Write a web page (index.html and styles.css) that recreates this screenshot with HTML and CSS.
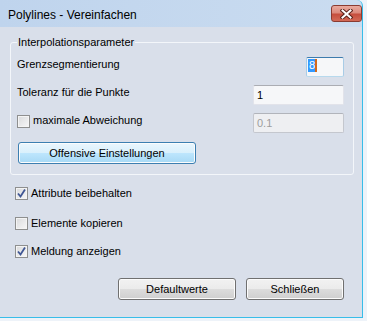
FILE: index.html
```html
<!DOCTYPE html>
<html lang="de">
<head>
<meta charset="utf-8">
<title>Polylines - Vereinfachen</title>
<link rel="stylesheet" href="styles.css">
</head>
<body>
<div class="window">
  <div class="titlebar">
    <span class="title">Polylines - Vereinfachen</span>
    <span class="close-x">
      <svg width="13" height="10" viewBox="0 0 13 10">
        <path d="M2.5 1.5 L10.5 8.5 M10.5 1.5 L2.5 8.5" stroke="#5a231b" stroke-width="4" stroke-linecap="square"/>
        <path d="M2.5 1.5 L10.5 8.5 M10.5 1.5 L2.5 8.5" stroke="#ffffff" stroke-width="2" stroke-linecap="square"/>
      </svg>
    </span>
  </div>
  <div class="client">
    <fieldset class="group">
      <legend>Interpolationsparameter</legend>
      <div class="row">
        <span class="label">Grenzsegmentierung</span>
        <span class="textbox focus narrow"><span class="sel">8</span><span class="caret"></span></span>
      </div>
      <div class="row">
        <span class="label">Toleranz für die Punkte</span>
        <span class="textbox wide">1</span>
      </div>
      <div class="row">
        <span class="check"></span>
        <span class="label">maximale Abweichung</span>
        <span class="textbox wide disabled">0.1</span>
      </div>
      <div class="btnrow">
        <span class="button hot offensive">Offensive Einstellungen</span>
      </div>
    </fieldset>
    <div class="checkrow r1">
      <span class="check checked"><svg width="11" height="11" viewBox="0 0 11 11"><path d="M2 5.5 L4.5 8.5 L9 1.5" fill="none" stroke="#3f5694" stroke-width="1.8"/></svg></span>
      <span class="label">Attribute beibehalten</span>
    </div>
    <div class="checkrow r2">
      <span class="check"></span>
      <span class="label">Elemente kopieren</span>
    </div>
    <div class="checkrow r3">
      <span class="check checked"><svg width="11" height="11" viewBox="0 0 11 11"><path d="M2 5.5 L4.5 8.5 L9 1.5" fill="none" stroke="#3f5694" stroke-width="1.8"/></svg></span>
      <span class="label">Meldung anzeigen</span>
    </div>
    <div class="actions">
      <span class="button defaults">Defaultwerte</span>
      <span class="button closebtn">Schließen</span>
    </div>
  </div>
</div>
</body>
</html>
```

FILE: styles.css
```css
html, body {
  margin: 0;
  padding: 0;
}
body {
  width: 367px;
  height: 321px;
  overflow: hidden;
  background: #eef3f9;
  font-family: "Liberation Sans", Arial, sans-serif;
  font-size: 11px;
  color: #000;
}
.window {
  box-sizing: border-box;
  width: 363px;
  height: 318px;
  display: flex;
  flex-direction: column;
  border-right: 1px solid #38bde9;
  border-bottom: 1px solid #38bde9;
  border-top-right-radius: 6px;
  background: linear-gradient(to right, #bfd4ed, #cadcf0);
}
.titlebar {
  height: 27px;
  flex: none;
  display: flex;
  align-items: flex-start;
  padding-left: 8px;
}
.title {
  font-size: 12px;
  line-height: 14px;
  margin-top: 8px;
}
.close-x {
  margin-left: auto;
  margin-top: 5px;
  width: 31px;
  height: 17px;
  box-sizing: border-box;
  border: 1px solid #8a3b31;
  border-radius: 3px;
  background: linear-gradient(#e9aa9f 0%, #dc8a7c 45%, #c64e3d 55%, #d36a57 100%);
  display: flex;
  align-items: center;
  justify-content: center;
}
.client {
  flex: 1;
  background: #d9dfea;
  padding: 9px 18px 0 10px;
  display: flex;
  flex-direction: column;
}
.group {
  margin: 0;
  width: 344px;
  box-sizing: border-box;
  border: 1px solid #f3f6fa;
  border-radius: 3px;
  padding: 8px 9px 10px 6px;
}
.group legend {
  padding: 0 1px;
  line-height: 13px;
}
.row {
  display: flex;
  align-items: flex-start;
  height: 20px;
}
.row + .row {
  margin-top: 8px;
}
.label {
  line-height: 13px;
  margin-top: 1px;
  white-space: nowrap;
}
.checkrow .label {
  margin-top: 0;
}
.textbox {
  margin-left: auto;
  box-sizing: border-box;
  height: 20px;
  border: 1px solid #e2e3ea;
  border-top-color: #abadb3;
  border-radius: 2px;
  background: #f6f7f9;
  line-height: 13px;
  padding: 3px 3px 0 3px;
  display: flex;
  align-items: flex-start;
}
.narrow { width: 38px; }
.wide { width: 91px; }
.textbox.focus {
  border-color: #a9cce6;
  border-top-color: #3d7bad;
  border-bottom-color: #b7d9ed;
  padding-top: 1px;
  padding-left: 1px;
}
.sel {
  background: #3399ff;
  color: #fff;
  padding: 0 0 0 1px;
  width: 6px;
  height: 13px;
  line-height: 13px;
}
.caret {
  width: 2px;
  height: 13px;
  background: #d46a1c;
}
.textbox.disabled {
  background: #eeeff2;
  border-color: #c4c7ce;
  border-top-color: #b1b4bb;
  color: #9d9d9d;
}
.check {
  flex: none;
  width: 13px;
  height: 13px;
  box-sizing: border-box;
  border: 1px solid #8e8f8f;
  background: linear-gradient(135deg, #d9dadc, #f7f7f8);
  box-shadow: inset 0 0 0 1px #f4f4f4;
  display: flex;
  align-items: center;
  justify-content: center;
}
.row .check {
  margin-top: 2px;
  margin-right: 3px;
}
.checkrow {
  display: flex;
  align-items: flex-start;
  height: 13px;
  margin-left: 5px;
}
.checkrow .check {
  margin-right: 3px;
}
.checkrow.r1 { margin-top: 12px; }
.checkrow.r2 { margin-top: 17px; }
.checkrow.r3 { margin-top: 15px; }
.btnrow {
  margin-top: 9px;
  display: flex;
}
.button {
  box-sizing: border-box;
  height: 22px;
  border: 1px solid #707070;
  border-radius: 3px;
  background: linear-gradient(#f2f2f2 0%, #ebebeb 50%, #dddddd 50%, #cfcfcf 100%);
  box-shadow: inset 0 0 0 1px #fcfcfc;
  display: flex;
  align-items: center;
  justify-content: center;
  line-height: 13px;
  white-space: nowrap;
}
.button.hot {
  border-color: #3c7fb1;
  background: linear-gradient(#eaf6fd 0%, #d9f0fc 50%, #bee6fd 50%, #a7d9f5 100%);
}
.offensive {
  width: 178px;
  margin-left: 1px;
}
.actions {
  margin-top: 20px;
  display: flex;
  justify-content: flex-end;
  gap: 10px;
}
.defaults { width: 118px; }
.closebtn { width: 98px; }
```
